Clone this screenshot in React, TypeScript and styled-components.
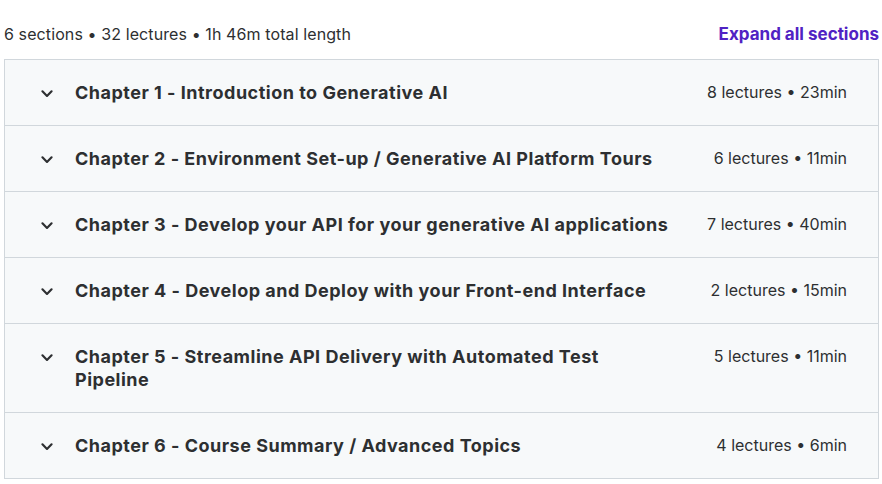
import React from "react";
import styled, { createGlobalStyle } from "styled-components";

const GlobalStyle = createGlobalStyle`
  html, body {
    margin: 0;
    padding: 0;
    background: #ffffff;
  }
  body {
    font-family: Inter, "Noto Sans", "Liberation Sans", sans-serif;
    color: #2d2f31;
  }
`;

const Page = styled.div`
  width: 882px;
  padding: 22px 3px 0 4px;
  box-sizing: border-box;
`;

const Header = styled.div`
  display: flex;
  align-items: center;
  justify-content: space-between;
  height: 24px;
  margin-bottom: 13px;
`;

const Summary = styled.span`
  font-size: 16px;
  line-height: 24px;
  letter-spacing: 0.1px;
  color: #2d2f31;
`;

const ExpandButton = styled.button`
  border: none;
  background: none;
  padding: 0;
  font-family: inherit;
  font-size: 17px;
  font-weight: 700;
  line-height: 24px;
  color: #5022c3;
  cursor: pointer;
`;

const SectionList = styled.div`
  border: 1px solid #d1d7dc;
  border-bottom: none;
  background: #f7f9fa;
`;

const Section = styled.div`
  display: flex;
  align-items: flex-start;
  gap: 18px;
  padding: 21px 31px 21px 32px;
  border-bottom: 1px solid #d1d7dc;
`;

const Chevron = styled.svg`
  flex: none;
  width: 20px;
  height: 20px;
  margin-top: 2px;
  color: #2d2f31;
`;

const Title = styled.h3`
  flex: 1;
  max-width: 597px;
  margin: 0;
  font-size: 18px;
  font-weight: 700;
  line-height: 23px;
  letter-spacing: 0.5px;
`;

const Meta = styled.span`
  flex: none;
  font-size: 16px;
  line-height: 23px;
  margin-left: auto;
`;

interface Chapter {
  title: string;
  lectures: number;
  length: string;
}

const chapters: Chapter[] = [
  { title: "Chapter 1 - Introduction to Generative AI", lectures: 8, length: "23min" },
  { title: "Chapter 2 - Environment Set-up / Generative AI Platform Tours", lectures: 6, length: "11min" },
  { title: "Chapter 3 - Develop your API for your generative AI applications", lectures: 7, length: "40min" },
  { title: "Chapter 4 - Develop and Deploy with your Front-end Interface", lectures: 2, length: "15min" },
  { title: "Chapter 5 - Streamline API Delivery with Automated Test Pipeline", lectures: 5, length: "11min" },
  { title: "Chapter 6 - Course Summary / Advanced Topics", lectures: 4, length: "6min" }
];

const ChevronDown = () => (
  <Chevron viewBox="0 0 24 24" fill="none" stroke="currentColor" strokeWidth="2.6" strokeLinecap="round" strokeLinejoin="round">
    <path d="M6.5 10l5.5 5.5 5.5-5.5" />
  </Chevron>
);

export default () => (
  <>
    <GlobalStyle />
    <Page>
      <Header>
        <Summary>6 sections • 32 lectures • 1h 46m total length</Summary>
        <ExpandButton>Expand all sections</ExpandButton>
      </Header>
      <SectionList>
        {chapters.map(chapter => (
          <Section key={chapter.title}>
            <ChevronDown />
            <Title>{chapter.title}</Title>
            <Meta>
              {chapter.lectures} lectures • {chapter.length}
            </Meta>
          </Section>
        ))}
      </SectionList>
    </Page>
  </>
);
